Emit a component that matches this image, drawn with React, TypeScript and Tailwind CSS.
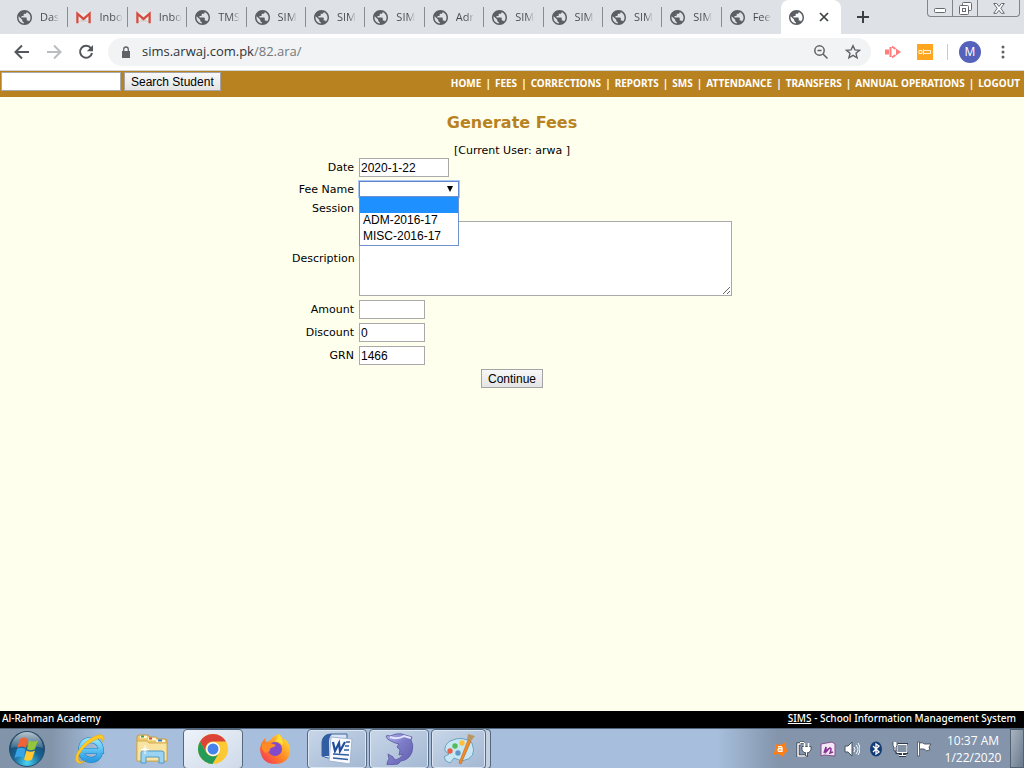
import React from 'react';

const tabs: [string, 'g' | 'm'][] = [
  ['Das', 'g'], ['Inbo', 'm'], ['Inbo', 'm'], ['TMS', 'g'], ['SIM', 'g'], ['SIM', 'g'], ['SIM', 'g'],
  ['Adr', 'g'], ['SIM', 'g'], ['SIM', 'g'], ['SIM', 'g'], ['SIM', 'g'], ['Fee', 'g'],
];

const nav = ['HOME', 'FEES', 'CORRECTIONS', 'REPORTS', 'SMS', 'ATTENDANCE', 'TRANSFERS', 'ANNUAL OPERATIONS', 'LOGOUT'];

const Globe = () => (
  <svg className="size-[15px] shrink-0" viewBox="2 2 20 20" fill="#5b5f64">
    <path d="M12 2C6.480 2 2 6.480 2 12s4.480 10 10 10 10-4.480 10-10S17.520 2 12 2zm-1 17.930c-3.950-.490-7-3.850-7-7.930 0-.620.080-1.210.210-1.790L9 15v1c0 1.100.900 2 2 2v1.930zm6.900-2.540c-.260-.810-1-1.390-1.900-1.390h-1v-3c0-.550-.450-1-1-1H8v-2h2c.550 0 1-.450 1-1V7h2c1.100 0 2-.900 2-2v-.410c2.930 1.190 5 4.060 5 7.410 0 2.080-.800 3.970-2.100 5.390z" />
  </svg>
);

const Gmail = () => (
  <svg className="size-[15px] shrink-0" viewBox="0 0 16 16">
    <path d="M1 3h14v11H1z" fill="#eceaea" />
    <path d="M2 13l5-5 1 1 1-1 5 5z" fill="#d5d5d5" />
    <path d="M1.500 14V4L8 9.500 14.500 4v10" fill="none" stroke="#d54b3d" strokeWidth="2.400" />
  </svg>
);

function TabStrip() {
  return (
    <div className="flex h-[34px] bg-[#dee1e6] text-[#45494d]">
      <div className="flex h-full flex-1 pl-[9px]">
        {tabs.map(([label, icon], i) => (
          <button key={i} type="button" className="flex h-full min-w-0 flex-1 items-center justify-between pl-2">
            <span className="flex items-center gap-2">
              {icon === 'g' ? <Globe /> : <Gmail />}
              <span className="bg-gradient-to-r from-[#45494d] from-60% to-[#dee1e6] bg-clip-text text-left text-[11px] text-transparent">{label}</span>
            </span>
            {i < tabs.length - 1 && <span className="h-5 w-px shrink-0 bg-[#898c91]" />}
          </button>
        ))}
      </div>
      <div className="flex h-full w-[60px] shrink-0 items-center gap-3 rounded-t-lg bg-white pl-2">
        <Globe />
        <button type="button" aria-label="Close tab" className="pl-0.5">
          <svg className="size-3" viewBox="0 0 12 12"><path d="M2 2l8 8M10 2l-8 8" stroke="#3c4043" strokeWidth="1.700" /></svg>
        </button>
      </div>
      <div className="flex w-[183px] shrink-0 justify-between">
        <button type="button" aria-label="New tab" className="ml-4 self-center">
          <svg className="size-3" viewBox="0 0 12 12"><path d="M6 0v12M0 6h12" stroke="#3c4043" strokeWidth="2" /></svg>
        </button>
        <div className="mr-1 flex h-[17px] w-[93px] rounded-b border border-t-0 border-[#80858b]">
          <button type="button" aria-label="Minimize" className="flex w-[25px] items-center justify-center border-r border-[#80858b]">
            <svg className="mt-1 h-2 w-3" viewBox="0 0 12 8"><rect x=".5" y="2.500" width="11" height="4" rx="1" fill="#fff" stroke="#666a70" /></svg>
          </button>
          <button type="button" aria-label="Restore" className="flex w-[25px] items-center justify-center border-r border-[#80858b]">
            <svg className="size-[13px]" viewBox="0 0 13 13" fill="#fff" stroke="#666a70"><rect x="3.500" y=".5" width="9" height="8" rx="1" /><rect x=".5" y="3.500" width="9" height="9" rx="1" /><rect x="3.500" y="6.500" width="3" height="3" /></svg>
          </button>
          <button type="button" aria-label="Close" className="flex flex-1 items-center justify-center">
            <svg className="h-[11px] w-3" viewBox="0 0 12 11"><path d="M.7.500h3l2.300 3 2.300-3h3L7.800 5.300l3.500 5h-3L6 7.300l-2.300 3h-3l3.500-5z" fill="#fff" stroke="#666a70" /></svg>
          </button>
        </div>
      </div>
    </div>
  );
}

function AddressBar() {
  return (
    <div className="flex h-[37px] items-center border-b border-[#d2d4d7] bg-white text-[#5f6368]">
      <div className="flex w-[108px] shrink-0 items-center gap-3 pl-3">
        <button type="button" aria-label="Back"><svg className="size-5" viewBox="0 0 20 20" fill="none" stroke="#53575b" strokeWidth="2"><path d="M17 10H4M10 3.500L3.500 10l6.500 6.500" /></svg></button>
        <button type="button" aria-label="Forward"><svg className="size-5" viewBox="0 0 20 20" fill="none" stroke="#babcbe" strokeWidth="2"><path d="M3 10h13M10 3.500l6.500 6.500-6.500 6.500" /></svg></button>
        <button type="button" aria-label="Reload"><svg className="size-5" viewBox="0 0 20 20"><path d="M15 6.300A6 6 0 1 0 16 11" fill="none" stroke="#53575b" strokeWidth="2" /><path d="M17 3v6.200h-6.200z" fill="#53575b" /></svg></button>
      </div>
      <div className="flex h-7 flex-1 items-center rounded-full bg-[#f1f3f4] pr-2.5 pl-3">
        <svg className="h-3 w-3" viewBox="0 0 12 12"><path d="M2 5h8v7H2z" fill="#5f6368" /><path d="M3.700 5V3.300a2.300 2.300 0 0 1 4.600 0V5" fill="none" stroke="#5f6368" strokeWidth="1.300" /></svg>
        <span className="pl-2.5 font-['Open_Sans','Noto_Sans',sans-serif] text-[13px] text-[#74787c]"><span className="text-[#303338]">sims.arwaj.com.pk</span>/82.ara/</span>
        <button type="button" aria-label="Zoom" className="ml-auto"><svg className="size-4" viewBox="0 0 16 16" fill="none" stroke="#5f6368" strokeWidth="1.500"><circle cx="6.500" cy="6.500" r="4.700" /><path d="M10 10l4.500 4.500M4.500 6.500h4" /></svg></button>
        <button type="button" aria-label="Bookmark" className="ml-4"><svg className="size-4" viewBox="0 0 16 16" fill="none" stroke="#5f6368" strokeWidth="1.400"><path d="M8 1.700l1.900 4.200 4.600.400-3.500 3 1.100 4.500L8 11.400l-4.100 2.400 1.100-4.500-3.500-3 4.600-.400z" /></svg></button>
      </div>
      <div className="flex w-[153px] shrink-0 items-center pl-[13px]">
        <svg className="size-[18px]" viewBox="0 0 18 18"><path d="M1 6.500h4v5H1z" fill="#ff7d7d" /><path d="M6.500 4v10M8 3.500L11.500 6M8 14.500l3.500-2.500" fill="none" stroke="#ff7d7d" strokeWidth="2" /><path d="M12 5.500L17 9l-5 3.500z" fill="#ff7d7d" /></svg>
        <svg className="ml-[15px] size-4" viewBox="0 0 16 16"><path d="M0 0h16v16H0z" fill="#ffa51f" /><path d="M2 6.500h3v3H2zM6.500 5v6M7 6.500h6.500v3H7" fill="none" stroke="#fff2d8" /></svg>
        <span className="ml-3.5 h-4 w-px bg-[#c8cacc]" />
        <span className="ml-[11px] flex size-[22px] items-center justify-center rounded-full bg-[#5562bb] font-['Open_Sans',sans-serif] text-xs text-white">M</span>
        <button type="button" aria-label="Menu" className="ml-3.5"><svg className="size-4" viewBox="0 0 16 16" fill="#5f6368"><circle cx="8" cy="3" r="1.500" /><circle cx="8" cy="8" r="1.500" /><circle cx="8" cy="13" r="1.500" /></svg></button>
      </div>
    </div>
  );
}

const field = "h-[19px] border border-[#a9a9a9] bg-white px-px font-['Liberation_Sans',sans-serif] text-xs text-black";
const button = "h-[19px] border border-[#a4a4a4] bg-gradient-to-b from-[#f8f8f8] to-[#e4e4e4] px-1.5 font-['Liberation_Sans',sans-serif] text-xs leading-4 text-black";
const caption = 'pt-0.5 text-right';

function FeeForm() {
  return (
    <form className="flex flex-col" onSubmit={(e) => e.preventDefault()}>
      <h1 className="pt-4 text-center font-['DejaVu_Sans',sans-serif] text-base leading-5 font-bold text-[#b98221]">Generate Fees</h1>
      <p className="pt-3 text-center text-[11px] leading-3">[Current User: arwa ]</p>
      <div className="mx-auto grid w-[440px] grid-cols-[62px_1fr] items-center gap-x-[5px] text-[11px]">
        <label htmlFor="date" className={caption}>Date</label>
        <div className="flex h-[21px] items-center"><input id="date" defaultValue="2020-1-22" className={field + ' w-[90px]'} /></div>
        <label htmlFor="fee" className={caption}>Fee Name</label>
        <div className="relative flex h-[22px] items-center">
          <select id="fee" className="h-4 w-[100px] appearance-none border border-[#5f86cf] bg-white outline outline-[#a9c6f5]">
            <option></option>
            <option>ADM-2016-17</option>
            <option>MISC-2016-17</option>
          </select>
          <svg className="pointer-events-none absolute top-2 left-[88px] size-1.5" viewBox="0 0 6 6"><path d="M0 0h6L3 6z" /></svg>
          <ul className="absolute top-[18px] left-0 z-10 w-[100px] border border-[#6f92cf] bg-white font-['Liberation_Sans',sans-serif] text-xs leading-[14px]">
            <li className="h-4 bg-[#1e90ff]" />
            <li className="pb-0.5 pl-[3px]">ADM-2016-17</li>
            <li className="pb-0.5 pl-[3px]">MISC-2016-17</li>
          </ul>
        </div>
        <span className="text-right">Session</span>
        <div className="h-[19px]" />
        <label htmlFor="description" className={caption}>Description</label>
        <div className="flex h-[79px] items-center"><textarea id="description" className="h-[75px] w-[373px] resize border border-[#a9a9a9] bg-white" /></div>
        <label htmlFor="amount" className={caption}>Amount</label>
        <div className="flex h-[23px] items-center"><input id="amount" className={field + ' w-[66px]'} /></div>
        <label htmlFor="discount" className={caption}>Discount</label>
        <div className="flex h-[23px] items-center"><input id="discount" defaultValue="0" className={field + ' w-[66px]'} /></div>
        <label htmlFor="grn" className={caption}>GRN</label>
        <div className="flex h-[23px] items-center"><input id="grn" defaultValue="1466" className={field + ' w-[66px]'} /></div>
      </div>
      <button type="submit" className={button + ' mt-0.5 self-center'}>Continue</button>
    </form>
  );
}

const StartOrb = () => (
  <svg className="size-[38px]" viewBox="0 0 38 38">
    <defs>
      <radialGradient id="orb" cx=".5" cy=".9" r=".8"><stop offset="0" stopColor="#49d4f5" /><stop offset=".5" stopColor="#186596" /><stop offset="1" stopColor="#16405f" /></radialGradient>
      <linearGradient id="gloss" x2="0" y2="1"><stop stopColor="#fff" stopOpacity=".7" /><stop offset="1" stopColor="#fff" stopOpacity=".15" /></linearGradient>
    </defs>
    <circle cx="19" cy="19" r="17.500" fill="url(#orb)" stroke="#294d68" />
    <path d="M3 18a16 16 0 0 1 32 0q-16-5-32 0z" fill="url(#gloss)" />
    <path d="M12 9q4-3 8 0l-2 9q-4-3-9 0z" fill="#ee6338" />
    <path d="M21 10q4 3 9 0l-3 9q-4 2.500-8 0z" fill="#94c63c" />
    <path d="M9 19q4-3 8.500 0l-2 9q-4-3-9 0z" fill="#38a4e8" />
    <path d="M18.500 20.500q4 2.500 8.500 0l-3 9q-4 2.500-8 0z" fill="#ffc92f" />
  </svg>
);

const Explorer = () => (
  <svg className="size-8" viewBox="0 0 32 32">
    <defs><linearGradient id="ie" x2="0" y2="1"><stop stopColor="#8ee4ff" /><stop offset="1" stopColor="#2a9de4" /></linearGradient></defs>
    <path d="M26 20.500Q23.500 27 17 27 7 26 7 17 7.500 7.500 17 7q9.500.500 10 11H9" fill="none" stroke="#277dbc" strokeWidth="6" />
    <path d="M26 20.500Q23.500 27 17 27 7 26 7 17 7.500 7.500 17 7q9.500.500 10 11H9" fill="none" stroke="url(#ie)" strokeWidth="4.800" />
    <path d="M3 29C-2 24 8 10 19 4q10-5 11 1 0 2-1 4 0-6-8-2C12 11 1 23 5 28q2 2 6 0-5 4-8 1z" fill="#ffca28" stroke="#e8a711" strokeWidth=".6" />
  </svg>
);

const Folder = () => (
  <svg className="size-8" viewBox="0 0 32 32">
    <path d="M1 4q0-2 2-2h9l2 2h6l2 2h7q2 0 2 2v20H1z" fill="#eec967" stroke="#c49a45" />
    <path d="M4 4h7M12 6h8M20 8h9" stroke="#fff7d8" strokeWidth="2.500" />
    <path d="M5 3.500h3" stroke="#3ba353" strokeWidth="2" /><path d="M13 5.500h3" stroke="#d34e3b" strokeWidth="2" /><path d="M22 7.500h4" stroke="#377dc6" strokeWidth="2" />
    <path d="M1 8h10l2 2h18v18H1z" fill="#f8e3a0" stroke="#d3ad55" />
    <path d="M5 30V20q0-2 2-2h19q2 0 2 2v10h-5v-6H10v6z" fill="#9bd3f2" stroke="#5499c5" />
    <path d="M9 12v9M5 16.500h8M7 14.500l4 4M11 14.500l-4 4" stroke="#fff" strokeWidth="1" />
  </svg>
);

const Chrome = () => (
  <svg className="size-8" viewBox="0 0 32 32">
    <circle cx="16" cy="16" r="15" fill="#fcc934" />
    <path d="M3 8.500A15 15 0 0 1 29 8.500H16a7.500 7.500 0 0 0-6.500 11.300z" fill="#dc4437" />
    <path d="M3 8.500l6.500 11.200A7.500 7.500 0 0 0 21 21.500L15.500 31A15 15 0 0 1 3 8.500z" fill="#249b58" />
    <circle cx="16" cy="16" r="7" fill="#fff" /><circle cx="16" cy="16" r="5.500" fill="#4783ed" />
  </svg>
);

const Firefox = () => (
  <svg className="size-8" viewBox="0 0 32 32">
    <defs><linearGradient id="fox" x1="1" x2="0" y2="1"><stop stopColor="#fff13c" /><stop offset=".5" stopColor="#ff8b23" /><stop offset="1" stopColor="#f5265f" /></linearGradient></defs>
    <path d="M20 1q4 3 4 6l2-1q6 6 5 13-2 12-15 12T1 17q0-6 5-12l1 4 4-1q2-5 9-7z" fill="url(#fox)" />
    <circle cx="16" cy="16" r="7" fill="#814acb" />
    <path d="M3 11q5-3 8-1l6 2q-1 2-5 3-2 1-1 3l-5 2-3-4z" fill="#ff8b25" />
    <path d="M19 1q5 4 5 11-3-3-8-4 4-3 3-7z" fill="#ffe13a" />
  </svg>
);

const Word = () => (
  <svg className="size-8" viewBox="0 0 32 32">
    <path d="M1 23V9q1-8 9-8h16v24H7z" fill="#d8e6f7" stroke="#3d649f" />
    <path d="M1 23V9q1-8 8-8h2Q8 4 8 9v14z" fill="#315da3" />
    <path d="M10 4l21 2-2 25-21-3z" fill="#f8faff" stroke="#a4b5d0" />
    <path d="M12 9l2 9 4-8 1 8 5-9" fill="none" stroke="#204d9b" strokeWidth="2.200" />
    <path d="M25 9h4M24 13h4M23 17h5M12 21l16 1M12 25l15 1.500" stroke="#315e9f" strokeWidth="1.500" />
  </svg>
);

const Dolphin = () => (
  <svg className="size-8" viewBox="0 0 32 32">
    <defs><linearGradient id="dolphin" x1="0" x2="1" y2="1"><stop stopColor="#b2b5ee" /><stop offset=".45" stopColor="#7d7cc8" /><stop offset="1" stopColor="#605eae" /></linearGradient></defs>
    <path d="M3 3q2-1 4 0l6-2q5-1 9 1l7 2-1 3q3 5 1 12-3 8-11 9l-3 3-11 1q0-4 2-6l-1-5 5 3 2 3q6-1 8-6l-4 1 1-5-3-3 2-3Q11 10 8 8 4 7 3 3z" fill="url(#dolphin)" stroke="#5a559c" strokeWidth=".8" />
    <path d="M7 4q8 3 14-1l7 2" stroke="#e1e3ff" strokeWidth="2" fill="none" />
  </svg>
);

const Paint = () => (
  <svg className="size-8" viewBox="0 0 32 32">
    <path d="M7 8q13-6 22 2 6 15-10 18l-8-3-4 5q-5-1-6-6l5-3-4-3Q1 12 7 8z" fill="#c7e7f5" stroke="#6ba2bd" />
    <circle cx="7" cy="18" r="2.700" fill="#ea6246" /><circle cx="12" cy="13" r="2.700" fill="#54bc57" /><circle cx="19" cy="10" r="2.700" fill="#ffbf38" /><circle cx="15" cy="20" r="2.700" fill="#5e99c4" />
    <path d="M28 8L18 31l-2-1L25 7z" fill="#f28c27" stroke="#b8661f" strokeWidth=".6" />
    <path d="M24 7l1-6 7 2-4 5z" fill="#b99765" />
  </svg>
);

const taskButton = 'flex h-10 w-[60px] items-center justify-center rounded-sm border border-[#56697e] bg-gradient-to-br from-[#c8d6e8] to-[#a3b8d3] shadow-[inset_0_0_0_1px_#dce6f2]';

function Tray() {
  return (
    <div className="flex items-center gap-2">
      <svg className="size-4" viewBox="0 0 16 16"><path d="M3 3l5 1 6-3v6l2 3-3 2-2 4-4-3-6 1 2-5z" fill="#ff7d12" /><path d="M6 6q4-1 4 1v4M10 8q-4-1-4 1 0 2 4 1" stroke="#fff" strokeWidth="1.300" fill="none" /></svg>
      <svg className="size-4" viewBox="0 0 16 16" fill="none"><path d="M4.500 3H2v12h8v-1M4 1.500h4" stroke="#333b47" strokeWidth="3" /><path d="M4.500 3H2v12h8v-1M4 1.500h4" stroke="#fff" strokeWidth="1.500" /><path d="M6 5.500h9v3.500l-2 2.500h-1.500V15h-2v-3.500H8L6 9z" fill="#fff" stroke="#333b47" strokeWidth=".8" /><path d="M8.500 2v4M12.500 2v4" stroke="#fff" strokeWidth="1.500" /></svg>
      <svg className="size-4" viewBox="0 0 16 16"><path d="M1 3l11-2 3 2v12L4 14l-3 1z" fill="#f4e7f6" stroke="#86518d" /><path d="M4 12l2-6v5q5-7 5-2l-1 3 3-1" fill="none" stroke="#863391" strokeWidth="1.500" /></svg>
      <svg className="size-4" viewBox="0 0 16 16"><path d="M1 5h3l4-4v14l-4-4H1z" fill="#fff" stroke="#43505f" /><path d="M10 6q2 2 0 5M12 4q4 4 0 9M14 2q4 6 0 12" stroke="#fff" fill="none" /></svg>
      <svg className="size-4" viewBox="0 0 16 16"><ellipse cx="8" cy="8" rx="6" ry="7.500" fill="#113a75" /><path d="M5 5l6 6-3 2V3l3 2-6 6" fill="none" stroke="#fff" strokeWidth="1.300" /></svg>
      <svg className="size-4" viewBox="0 0 16 16"><path d="M6 3.500h9v8H5V9M7 14.500h7M10.500 12v2" fill="none" stroke="#303b49" strokeWidth="3" /><path d="M6 3.500h9v8H5V5z" fill="#8492a5" stroke="#fff" /><path d="M7 14.500h7M10.500 12v2" stroke="#fff" /><path d="M1 1v4l1 1v4h2V6l1-1V1" fill="#fff" stroke="#303b49" strokeWidth=".8" /></svg>
      <svg className="size-4" viewBox="0 0 16 16"><path d="M1.500 1h2v14h-2z" fill="#fff" stroke="#39424f" strokeWidth=".7" /><path d="M3.500 2q3-1 5 1h6.500l-2 3 1 3q-4 2-6-1H3.500z" fill="#fff" stroke="#39424f" strokeWidth=".8" /></svg>
    </div>
  );
}

function Taskbar() {
  return (
    <div className="flex h-10 items-center border-t border-[#52647a] bg-[linear-gradient(90deg,#8294aa_0%,#8294aa_5%,#a7bfdc_10%,#a7bfdc_70%,#8394ab_76%,#8394ab_100%)]">
      <div className="flex items-center">
        <button type="button" aria-label="Start" className="w-[60px] pl-2"><StartOrb /></button>
        <button type="button" aria-label="Internet Explorer" className="flex w-[60px] justify-center"><Explorer /></button>
        <button type="button" aria-label="File Explorer" className="flex w-[63px] justify-center"><Folder /></button>
        <button type="button" aria-label="Chrome" className="flex h-10 w-[60px] items-center justify-center rounded-sm border border-[#56697e] bg-gradient-to-br from-[#eef3f9] to-[#ced9e9]"><Chrome /></button>
        <button type="button" aria-label="Firefox" className="flex w-16 justify-center"><Firefox /></button>
        <div className="flex gap-0.5">
          <button type="button" aria-label="Word" className={taskButton}><Word /></button>
          <button type="button" aria-label="Dolphin" className={taskButton}><Dolphin /></button>
          <div className="flex">
            <button type="button" aria-label="Paint" className={taskButton.replace('w-[60px]', 'w-[55px]')}><Paint /></button>
            <span className="h-10 w-[5px] rounded-r-sm border border-l-0 border-[#56697e] bg-[#c3d1e3]" />
          </div>
        </div>
      </div>
      <div className="ml-auto flex h-full items-center">
        <Tray />
        <time className="w-[78px] pl-1 text-center font-['Open_Sans',sans-serif] text-xs leading-[17px] text-white">10:37 AM<br />1/22/2020</time>
        <span className="h-full w-[14px] border border-[#53606f] bg-gradient-to-br from-[#a9b4c1] to-[#697a8e]" />
      </div>
    </div>
  );
}

export default function App() {
  return (
    <div className="flex min-h-screen flex-col bg-[#ffffee] font-['DejaVu_Sans',sans-serif] text-black">
      <header className="font-['Open_Sans',sans-serif] text-xs">
        <TabStrip />
        <AddressBar />
      </header>
      <div className="flex h-[26px] items-start bg-[#b98221] pt-px">
        <form className="flex gap-[3px] pl-px" onSubmit={(e) => e.preventDefault()}>
          <input aria-label="Search Student" className={field + ' w-[120px]'} />
          <button type="submit" className={button}>Search Student</button>
        </form>
        <nav className="ml-auto flex gap-1 pr-1 font-['Noto_Sans',sans-serif] text-[10px] leading-[22px] font-bold text-white">
          {nav.map((n, i) => (
            <React.Fragment key={n}>{i > 0 && <span>|</span>}<a href="#">{n}</a></React.Fragment>
          ))}
        </nav>
      </div>
      <main className="flex-1"><FeeForm /></main>
      <footer className="flex h-[17px] items-start justify-between bg-black pr-2 pl-0.5 font-['Noto_Sans',sans-serif] text-[10px] leading-[14px] font-medium text-white">
        <span>Al-Rahman Academy</span>
        <span><a href="#" className="underline">SIMS</a> - School Information Management System</span>
      </footer>
      <Taskbar />
    </div>
  );
}
